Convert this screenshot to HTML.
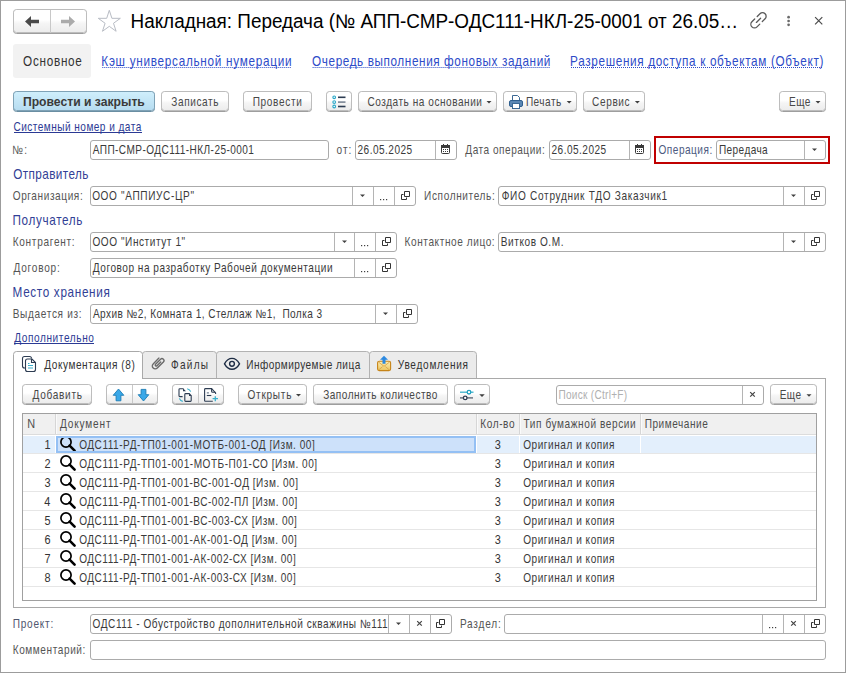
<!DOCTYPE html>
<html><head><meta charset="utf-8"><style>
html,body{margin:0;padding:0;background:#fff;}
svg{display:block;font-family:"Liberation Sans",sans-serif;}
</style></head><body>
<svg width="846" height="673" viewBox="0 0 846 673">
<defs>
<linearGradient id="gbtn" x1="0" y1="0" x2="0" y2="1"><stop offset="0" stop-color="#ffffff"/><stop offset="0.45" stop-color="#ffffff"/><stop offset="0.6" stop-color="#f5f5f5"/><stop offset="1" stop-color="#ececec"/></linearGradient>
<linearGradient id="genv" x1="0" y1="0" x2="0" y2="1"><stop offset="0" stop-color="#fdf0b8"/><stop offset="1" stop-color="#ecc45e"/></linearGradient>
<linearGradient id="gblue" x1="0" y1="0" x2="0" y2="1"><stop offset="0" stop-color="#d0effc"/><stop offset="1" stop-color="#b6dcf0"/></linearGradient>
</defs>
<rect x="0" y="0" width="846" height="673" fill="#fff"/>
<rect x="0.5" y="0.5" width="845" height="672" rx="0" fill="none" stroke="#9c9c9c" stroke-width="1"/>
<rect x="13.5" y="10" width="73" height="23.5" rx="3" fill="none" stroke="#9e9e9e"/>
<rect x="13.5" y="9.5" width="73" height="23" rx="3" fill="url(#gbtn)" stroke="#bdbdbd"/>
<rect x="50" y="10" width="1" height="23" fill="#c8c8c8"/>
<path d="M25 21.5l6-5.5v3.8h8v3.4h-8v3.8z" fill="#4a4a4a"/>
<path d="M75 21.5l-6-5.5v3.8h-8v3.4h8v3.8z" fill="#ababab"/>
<path d="M109.30 10.30L111.90 18.32L120.33 18.32L113.51 23.27L116.12 31.28L109.30 26.33L102.48 31.28L105.09 23.27L98.27 18.32L106.70 18.32z" fill="none" stroke="#b8bcc4" stroke-width="1" stroke-linejoin="round"/>
<text transform="translate(130.49,28) scale(0.9694,1)" font-size="19.5" font-weight="400" fill="#000" xml:space="preserve">Накладная: Передача (№ АПП-СМР-ОДС111-НКЛ-25-0001 от 26.05…</text>
<g transform="translate(758.5,20.3) rotate(-45)" fill="none" stroke="#5a5a5a" stroke-width="1.3" stroke-linecap="round"><path d="M1.8 -3.6H5.7A3.6 3.6 0 0 1 5.7 3.6H1.8"/><path d="M-1.8 -3.6H-5.7A3.6 3.6 0 0 0 -5.7 3.6H-1.8"/><path d="M-3 0H3"/></g>
<circle cx="788.6" cy="17.2" r="1.35" fill="#6a6a6a"/>
<circle cx="788.6" cy="21" r="1.35" fill="#6a6a6a"/>
<circle cx="788.6" cy="24.8" r="1.35" fill="#6a6a6a"/>
<path d="M815.1 17.099999999999998L822.3000000000001 24.3M822.3000000000001 17.099999999999998L815.1 24.3" stroke="#4a4a4a" stroke-width="1.2"/>
<rect x="13" y="44" width="78" height="34" rx="3" fill="#f2f2f2"/>
<text transform="translate(23.05,65.6) scale(0.8400,1)" font-size="14" font-weight="400" fill="#333" xml:space="preserve" letter-spacing="0.860">Основное</text>
<text transform="translate(101.36,65.6) scale(0.8400,1)" font-size="14" font-weight="400" fill="#2d4bc8" xml:space="preserve" letter-spacing="0.854">Кэш универсальной нумерации</text>
<line x1="102.3" y1="67.5" x2="291" y2="67.5" stroke="#2d4bc8" stroke-width="1" stroke-dasharray="1 1"/>
<text transform="translate(312.05,65.6) scale(0.8400,1)" font-size="14" font-weight="400" fill="#2d4bc8" xml:space="preserve" letter-spacing="0.716">Очередь выполнения фоновых заданий</text>
<line x1="312.6" y1="67.5" x2="550" y2="67.5" stroke="#2d4bc8" stroke-width="1" stroke-dasharray="1 1"/>
<text transform="translate(570.06,65.6) scale(0.8400,1)" font-size="14" font-weight="400" fill="#2d4bc8" xml:space="preserve" letter-spacing="0.783">Разрешения доступа к объектам (Объект)</text>
<line x1="571" y1="67.5" x2="823" y2="67.5" stroke="#2d4bc8" stroke-width="1" stroke-dasharray="1 1"/>
<rect x="13.5" y="92" width="141" height="19.5" rx="3" fill="none" stroke="#6a8ea2"/>
<rect x="13.5" y="91.5" width="141" height="19" rx="3" fill="url(#gblue)" stroke="#7fa2b6"/>
<text transform="translate(22.89,106) scale(1.0139,1)" font-size="12" font-weight="700" fill="#3a3a3a" xml:space="preserve">Провести и закрыть</text>
<rect x="161.5" y="92" width="67" height="19.5" rx="3" fill="none" stroke="#9e9e9e"/>
<rect x="161.5" y="91.5" width="67" height="19" rx="3" fill="url(#gbtn)" stroke="#bdbdbd"/>
<text transform="translate(171.26,106) scale(0.8400,1)" font-size="12" font-weight="400" fill="#484848" xml:space="preserve" letter-spacing="0.708">Записать</text>
<rect x="243.5" y="92" width="68" height="19.5" rx="3" fill="none" stroke="#9e9e9e"/>
<rect x="243.5" y="91.5" width="68" height="19" rx="3" fill="url(#gbtn)" stroke="#bdbdbd"/>
<text transform="translate(252.69,106) scale(0.8400,1)" font-size="12" font-weight="400" fill="#484848" xml:space="preserve" letter-spacing="0.770">Провести</text>
<rect x="326.5" y="92" width="25" height="19.5" rx="3" fill="none" stroke="#9e9e9e"/>
<rect x="326.5" y="91.5" width="25" height="19" rx="3" fill="url(#gbtn)" stroke="#bdbdbd"/>
<circle cx="334.2" cy="97.3" r="1.35" fill="#fff" stroke="#2aa8c8" stroke-width="1.1"/>
<rect x="338" y="96.5" width="7.5" height="1.6" fill="#2d3c52"/>
<circle cx="334.2" cy="102.1" r="1.35" fill="#fff" stroke="#2aa8c8" stroke-width="1.1"/>
<rect x="338" y="101.3" width="7.5" height="1.6" fill="#7a8594"/>
<circle cx="334.2" cy="106.5" r="1.35" fill="#fff" stroke="#2aa8c8" stroke-width="1.1"/>
<rect x="338" y="105.7" width="7.5" height="1.6" fill="#2d3c52"/>
<rect x="358.5" y="92" width="138" height="19.5" rx="3" fill="none" stroke="#9e9e9e"/>
<rect x="358.5" y="91.5" width="138" height="19" rx="3" fill="url(#gbtn)" stroke="#bdbdbd"/>
<text transform="translate(367.43,106) scale(0.8400,1)" font-size="12" font-weight="400" fill="#484848" xml:space="preserve" letter-spacing="0.625">Создать на основании</text>
<path d="M486.5 101h5l-2.5 2.5z" fill="#404040"/>
<rect x="503.5" y="92" width="73" height="19.5" rx="3" fill="none" stroke="#9e9e9e"/>
<rect x="503.5" y="91.5" width="73" height="19" rx="3" fill="url(#gbtn)" stroke="#bdbdbd"/>
<path d="M512.5 95.5h5l2 2v3h-7z" fill="#fff" stroke="#3b6894"/>
<rect x="509.5" y="100.5" width="13" height="6" rx="1.5" fill="#5b87b4" stroke="#2f5f8f"/>
<rect x="512.5" y="103.5" width="7" height="5" fill="#fff" stroke="#3b6894"/>
<text transform="translate(525.89,106) scale(0.8400,1)" font-size="12" font-weight="400" fill="#484848" xml:space="preserve" letter-spacing="0.575">Печать</text>
<path d="M566.7 101h5l-2.5 2.5z" fill="#404040"/>
<rect x="583.5" y="92" width="61" height="19.5" rx="3" fill="none" stroke="#9e9e9e"/>
<rect x="583.5" y="91.5" width="61" height="19" rx="3" fill="url(#gbtn)" stroke="#bdbdbd"/>
<text transform="translate(592.03,106) scale(0.8400,1)" font-size="12" font-weight="400" fill="#484848" xml:space="preserve" letter-spacing="0.738">Сервис</text>
<path d="M634.9 101h5l-2.5 2.5z" fill="#404040"/>
<rect x="779.5" y="92" width="46" height="19.5" rx="3" fill="none" stroke="#9e9e9e"/>
<rect x="779.5" y="91.5" width="46" height="19" rx="3" fill="url(#gbtn)" stroke="#bdbdbd"/>
<text transform="translate(789.09,106) scale(0.8400,1)" font-size="12" font-weight="400" fill="#484848" xml:space="preserve" letter-spacing="0.484">Еще</text>
<path d="M815.5 101h5l-2.5 2.5z" fill="#404040"/>
<text transform="translate(13.43,131) scale(0.8400,1)" font-size="12" font-weight="400" fill="#2b3a94" xml:space="preserve" letter-spacing="0.552">Системный номер и дата</text>
<rect x="14" y="132" width="128" height="1" fill="#2b3a94"/>
<text transform="translate(12.36,154) scale(0.8400,1)" font-size="12" font-weight="400" fill="#555555" xml:space="preserve" letter-spacing="1.167">№:</text>
<rect x="90.5" y="140.5" width="238" height="19" rx="2.5" fill="#fff" stroke="#ababab"/>
<text transform="translate(92.70,154) scale(0.8400,1)" font-size="12" font-weight="400" fill="#3a3a3a" xml:space="preserve" letter-spacing="0.508">АПП-СМР-ОДС111-НКЛ-25-0001</text>
<text transform="translate(336.40,154) scale(0.8400,1)" font-size="12" font-weight="400" fill="#555555" xml:space="preserve" letter-spacing="1.315">от:</text>
<rect x="355.5" y="140.5" width="101" height="19" rx="2.5" fill="#fff" stroke="#ababab"/>
<rect x="435" y="141" width="1" height="18" fill="#b4b4b4"/>
<text transform="translate(357.53,154) scale(0.8400,1)" font-size="12" font-weight="400" fill="#3a3a3a" xml:space="preserve" letter-spacing="0.556">26.05.2025</text>
<rect x="441.5" y="145.5" width="8" height="8" rx="1" fill="#fff" stroke="#3a3a3a"/>
<rect x="441" y="145" width="9" height="3" fill="#3a3a3a"/>
<rect x="443" y="144" width="1" height="2" fill="#3a3a3a"/>
<rect x="447" y="144" width="1" height="2" fill="#3a3a3a"/>
<rect x="443" y="149" width="1" height="1" fill="#3a3a3a"/>
<rect x="443" y="151" width="1" height="1" fill="#3a3a3a"/>
<rect x="445" y="149" width="1" height="1" fill="#3a3a3a"/>
<rect x="445" y="151" width="1" height="1" fill="#3a3a3a"/>
<rect x="447" y="149" width="1" height="1" fill="#3a3a3a"/>
<rect x="447" y="151" width="1" height="1" fill="#3a3a3a"/>
<text transform="translate(465.33,154) scale(0.8400,1)" font-size="12" font-weight="400" fill="#555555" xml:space="preserve" letter-spacing="0.601">Дата операции:</text>
<rect x="549.5" y="140.5" width="101" height="19" rx="2.5" fill="#fff" stroke="#ababab"/>
<rect x="629" y="141" width="1" height="18" fill="#b4b4b4"/>
<text transform="translate(551.53,154) scale(0.8400,1)" font-size="12" font-weight="400" fill="#3a3a3a" xml:space="preserve" letter-spacing="0.556">26.05.2025</text>
<rect x="635.5" y="145.5" width="8" height="8" rx="1" fill="#fff" stroke="#3a3a3a"/>
<rect x="635" y="145" width="9" height="3" fill="#3a3a3a"/>
<rect x="637" y="144" width="1" height="2" fill="#3a3a3a"/>
<rect x="641" y="144" width="1" height="2" fill="#3a3a3a"/>
<rect x="637" y="149" width="1" height="1" fill="#3a3a3a"/>
<rect x="637" y="151" width="1" height="1" fill="#3a3a3a"/>
<rect x="639" y="149" width="1" height="1" fill="#3a3a3a"/>
<rect x="639" y="151" width="1" height="1" fill="#3a3a3a"/>
<rect x="641" y="149" width="1" height="1" fill="#3a3a3a"/>
<rect x="641" y="151" width="1" height="1" fill="#3a3a3a"/>
<rect x="655" y="137" width="174" height="26" fill="none" stroke="#c00000" stroke-width="2"/>
<text transform="translate(658.53,154) scale(0.8400,1)" font-size="12" font-weight="400" fill="#4d5a80" xml:space="preserve" letter-spacing="0.583">Операция:</text>
<rect x="716.5" y="140.5" width="109" height="19" rx="2.5" fill="#fff" stroke="#ababab"/>
<rect x="804" y="141" width="1" height="18" fill="#b4b4b4"/>
<text transform="translate(718.99,154) scale(0.8400,1)" font-size="12" font-weight="400" fill="#3a3a3a" xml:space="preserve" letter-spacing="0.466">Передача</text>
<path d="M812.0 148.5h5l-2.5 2.5z" fill="#404040"/>
<text transform="translate(13.25,179) scale(0.8400,1)" font-size="14" font-weight="400" fill="#323f96" xml:space="preserve" letter-spacing="0.480">Отправитель</text>
<text transform="translate(12.73,200) scale(0.8400,1)" font-size="12" font-weight="400" fill="#555555" xml:space="preserve" letter-spacing="0.690">Организация:</text>
<rect x="90.5" y="186.5" width="325" height="19" rx="2.5" fill="#fff" stroke="#ababab"/>
<rect x="352" y="187" width="1" height="18" fill="#b4b4b4"/>
<rect x="373" y="187" width="1" height="18" fill="#b4b4b4"/>
<rect x="394" y="187" width="1" height="18" fill="#b4b4b4"/>
<text transform="translate(92.13,200) scale(0.8400,1)" font-size="12" font-weight="400" fill="#3a3a3a" xml:space="preserve" letter-spacing="0.754">ООО &quot;АППИУС-ЦР&quot;</text>
<path d="M360.0 194.5h5l-2.5 2.5z" fill="#404040"/>
<rect x="380.0" y="199" width="1.2" height="1.2" fill="#404040"/>
<rect x="383.0" y="199" width="1.2" height="1.2" fill="#404040"/>
<rect x="386.0" y="199" width="1.2" height="1.2" fill="#404040"/>
<path d="M404.5 191.5h5v5h-5z" fill="none" stroke="#333" stroke-width="1"/>
<path d="M403.5 194.5h-2v5h5v-2" fill="none" stroke="#333" stroke-width="1"/>
<text transform="translate(424.09,200) scale(0.8400,1)" font-size="12" font-weight="400" fill="#555555" xml:space="preserve" letter-spacing="0.733">Исполнитель:</text>
<rect x="498.5" y="186.5" width="327" height="19" rx="2.5" fill="#fff" stroke="#ababab"/>
<rect x="783" y="187" width="1" height="18" fill="#b4b4b4"/>
<rect x="804" y="187" width="1" height="18" fill="#b4b4b4"/>
<text transform="translate(501.76,200) scale(0.8400,1)" font-size="12" font-weight="400" fill="#3a3a3a" xml:space="preserve" letter-spacing="0.818">ФИО Сотрудник ТДО Заказчик1</text>
<path d="M791.0 194.5h5l-2.5 2.5z" fill="#404040"/>
<path d="M814.5 191.5h5v5h-5z" fill="none" stroke="#333" stroke-width="1"/>
<path d="M813.5 194.5h-2v5h5v-2" fill="none" stroke="#333" stroke-width="1"/>
<text transform="translate(12.56,225) scale(0.8400,1)" font-size="14" font-weight="400" fill="#323f96" xml:space="preserve" letter-spacing="0.744">Получатель</text>
<text transform="translate(12.69,246) scale(0.8400,1)" font-size="12" font-weight="400" fill="#555555" xml:space="preserve" letter-spacing="0.843">Контрагент:</text>
<rect x="90.5" y="232.5" width="306" height="19" rx="2.5" fill="#fff" stroke="#ababab"/>
<rect x="334" y="233" width="1" height="18" fill="#b4b4b4"/>
<rect x="354" y="233" width="1" height="18" fill="#b4b4b4"/>
<rect x="375" y="233" width="1" height="18" fill="#b4b4b4"/>
<text transform="translate(92.43,246) scale(0.8400,1)" font-size="12" font-weight="400" fill="#3a3a3a" xml:space="preserve" letter-spacing="0.662">ООО &quot;Институт 1&quot;</text>
<path d="M342.0 240.5h5l-2.5 2.5z" fill="#404040"/>
<rect x="361.0" y="245" width="1.2" height="1.2" fill="#404040"/>
<rect x="364.0" y="245" width="1.2" height="1.2" fill="#404040"/>
<rect x="367.0" y="245" width="1.2" height="1.2" fill="#404040"/>
<path d="M385.5 237.5h5v5h-5z" fill="none" stroke="#333" stroke-width="1"/>
<path d="M384.5 240.5h-2v5h5v-2" fill="none" stroke="#333" stroke-width="1"/>
<text transform="translate(404.59,246) scale(0.8400,1)" font-size="12" font-weight="400" fill="#555555" xml:space="preserve" letter-spacing="0.685">Контактное лицо:</text>
<rect x="498.5" y="232.5" width="327" height="19" rx="2.5" fill="#fff" stroke="#ababab"/>
<rect x="783" y="233" width="1" height="18" fill="#b4b4b4"/>
<rect x="804" y="233" width="1" height="18" fill="#b4b4b4"/>
<text transform="translate(500.79,246) scale(0.8400,1)" font-size="12" font-weight="400" fill="#3a3a3a" xml:space="preserve" letter-spacing="0.670">Витков О.М.</text>
<path d="M791.0 240.5h5l-2.5 2.5z" fill="#404040"/>
<path d="M814.5 237.5h5v5h-5z" fill="none" stroke="#333" stroke-width="1"/>
<path d="M813.5 240.5h-2v5h5v-2" fill="none" stroke="#333" stroke-width="1"/>
<text transform="translate(13.43,272) scale(0.8400,1)" font-size="12" font-weight="400" fill="#555555" xml:space="preserve" letter-spacing="0.933">Договор:</text>
<rect x="90.5" y="258.5" width="306" height="19" rx="2.5" fill="#fff" stroke="#ababab"/>
<rect x="354" y="259" width="1" height="18" fill="#b4b4b4"/>
<rect x="375" y="259" width="1" height="18" fill="#b4b4b4"/>
<text transform="translate(92.83,272) scale(0.8400,1)" font-size="12" font-weight="400" fill="#3a3a3a" xml:space="preserve" letter-spacing="0.616">Договор на разработку Рабочей документации</text>
<rect x="361.0" y="271" width="1.2" height="1.2" fill="#404040"/>
<rect x="364.0" y="271" width="1.2" height="1.2" fill="#404040"/>
<rect x="367.0" y="271" width="1.2" height="1.2" fill="#404040"/>
<path d="M385.5 263.5h5v5h-5z" fill="none" stroke="#333" stroke-width="1"/>
<path d="M384.5 266.5h-2v5h5v-2" fill="none" stroke="#333" stroke-width="1"/>
<text transform="translate(12.56,297) scale(0.8400,1)" font-size="14" font-weight="400" fill="#323f96" xml:space="preserve" letter-spacing="0.787">Место хранения</text>
<text transform="translate(12.69,318) scale(0.8400,1)" font-size="12" font-weight="400" fill="#555555" xml:space="preserve" letter-spacing="0.793">Выдается из:</text>
<rect x="90.5" y="304.5" width="327" height="19" rx="2.5" fill="#fff" stroke="#ababab"/>
<rect x="375" y="305" width="1" height="18" fill="#b4b4b4"/>
<rect x="396" y="305" width="1" height="18" fill="#b4b4b4"/>
<text transform="translate(92.90,318) scale(0.8400,1)" font-size="12" font-weight="400" fill="#3a3a3a" xml:space="preserve" letter-spacing="0.498">Архив №2, Комната 1, Стеллаж №1,  Полка 3</text>
<path d="M383.0 312.5h5l-2.5 2.5z" fill="#404040"/>
<path d="M406.5 309.5h5v5h-5z" fill="none" stroke="#333" stroke-width="1"/>
<path d="M405.5 312.5h-2v5h5v-2" fill="none" stroke="#333" stroke-width="1"/>
<text transform="translate(14.13,342) scale(0.8400,1)" font-size="12" font-weight="400" fill="#2b3a94" xml:space="preserve" letter-spacing="0.724">Дополнительно</text>
<rect x="14" y="343" width="80" height="1" fill="#2b3a94"/>
<path d="M142.5 378V354.5a3 3 0 0 1 3-3H213.5a3 3 0 0 1 3 3V378" fill="#ebebeb" stroke="#b2b2b2"/>
<path d="M216.5 378V354.5a3 3 0 0 1 3-3H366.5a3 3 0 0 1 3 3V378" fill="#ebebeb" stroke="#b2b2b2"/>
<path d="M369.5 378V354.5a3 3 0 0 1 3-3H473.5a3 3 0 0 1 3 3V378" fill="#ebebeb" stroke="#b2b2b2"/>
<rect x="13.5" y="378.5" width="812" height="229" fill="#fff" stroke="#a9a9a9"/>
<path d="M13.5 379V354.5a3 3 0 0 1 3-3H139.5a3 3 0 0 1 3 3V379" fill="#fff" stroke="#a9a9a9"/>
<rect x="14" y="378" width="128" height="2" fill="#fff"/>
<g fill="none" stroke="#2d3c52" stroke-width="1.1"><path d="M25 368h-0.5a2 2 0 0 1-2-2v-7.5a2 2 0 0 1 2-2h5a2 2 0 0 1 2 2"/><path d="M25.5 369.5v-8.5a2 2 0 0 1 2-2h4.5l3.5 3.5v7a2 2 0 0 1-2 2h-6a2 2 0 0 1-2-2z" fill="#fff"/><path d="M31.5 359v3.5h3.5"/></g>
<g stroke="#3ab0cc" stroke-width="1.1"><path d="M28 363.5h1.5M28 365.5h5M28 368h5"/></g>
<text transform="translate(44.23,369) scale(0.8400,1)" font-size="12" font-weight="400" fill="#333" xml:space="preserve" letter-spacing="0.666">Документация (8)</text>
<g transform="translate(157.9,363.3) rotate(-45) scale(1.05)" fill="none" stroke="#6a6a6a" stroke-width="1.3" stroke-linecap="round"><path d="M4.2 -2.8H-3.6A2.8 2.8 0 0 0 -3.6 2.8H4.6A1.9 1.9 0 0 0 4.6 -1H-2.2A1 1 0 0 0 -2.2 1H2.8"/></g>
<text transform="translate(171.06,369) scale(0.8400,1)" font-size="12" font-weight="400" fill="#333" xml:space="preserve" letter-spacing="1.465">Файлы</text>
<path d="M224.5 363.8c2-3.6 4.6-5.4 7.5-5.4s5.5 1.8 7.5 5.4c-2 3.6-4.6 5.4-7.5 5.4s-5.5-1.8-7.5-5.4z" fill="none" stroke="#1d2c44" stroke-width="1.4"/>
<circle cx="232" cy="363.8" r="2.4" fill="none" stroke="#1d2c44" stroke-width="1.4"/>
<text transform="translate(246.19,369) scale(0.8400,1)" font-size="12" font-weight="400" fill="#333" xml:space="preserve" letter-spacing="0.541">Информируемые лица</text>
<rect x="377.6" y="361.2" width="13" height="9.4" rx="1.6" fill="url(#genv)" stroke="#c68419" stroke-width="1.1"/>
<path d="M378.4 362l5.6 4.3 5.6-4.3M378.6 370l4-3.4M389.4 370l-4-3.4" fill="none" stroke="#d8a448" stroke-width="0.9"/>
<path d="M384 355.8l4 4h-2.5v4h-3v-4H380z" fill="#2a88e0"/>
<text transform="translate(397.83,369) scale(0.8400,1)" font-size="12" font-weight="400" fill="#333" xml:space="preserve" letter-spacing="0.858">Уведомления</text>
<rect x="22.5" y="385" width="69" height="19.5" rx="3" fill="none" stroke="#9e9e9e"/>
<rect x="22.5" y="384.5" width="69" height="19" rx="3" fill="url(#gbtn)" stroke="#bdbdbd"/>
<text transform="translate(32.53,399) scale(0.8400,1)" font-size="12" font-weight="400" fill="#484848" xml:space="preserve" letter-spacing="0.836">Добавить</text>
<rect x="106.5" y="385" width="51" height="19.5" rx="3" fill="none" stroke="#9e9e9e"/>
<rect x="106.5" y="384.5" width="51" height="19" rx="3" fill="url(#gbtn)" stroke="#bdbdbd"/>
<rect x="132" y="385" width="1" height="18" fill="#c8c8c8"/>
<path d="M118.5 389l5.3 6.3h-2.9v5.5h-4.8v-5.5h-2.9z" fill="#3aa8e8" stroke="#1c7cb4" stroke-width="0.9"/>
<path d="M143.5 401l5.3-6.3h-2.9v-5.3h-4.8v5.3h-2.9z" fill="#3aa8e8" stroke="#1c7cb4" stroke-width="0.9"/>
<rect x="172.5" y="385" width="51" height="19.5" rx="3" fill="none" stroke="#9e9e9e"/>
<rect x="172.5" y="384.5" width="51" height="19" rx="3" fill="url(#gbtn)" stroke="#bdbdbd"/>
<rect x="198" y="385" width="1" height="18" fill="#c8c8c8"/>
<g fill="none" stroke="#2d3c52" stroke-width="1.1"><path d="M182.6 396.6H179.8a0.8 0.8 0 0 1-0.8-0.8V389.6a0.8 0.8 0 0 1 0.8-0.8H183.4"/><path d="M184.8 400.6V394.4a0.8 0.8 0 0 1 0.8-0.8H189.2L191.2 395.8V400.6a0.8 0.8 0 0 1-0.8 0.8H185.6a0.8 0.8 0 0 1-0.8-0.8z"/></g>
<path d="M183 388.2l3 3h-3z" fill="#2d3c52"/>
<path d="M189 393.4l2.6 2.6h-2.6z" fill="#2d3c52"/>
<g fill="none" stroke="#3ab0cc" stroke-width="1.1"><path d="M187.2 388.7q2.7 0.6 3.5 3"/><path d="M179.4 398.4q0.8 2.5 3.4 3"/></g>
<g fill="none" stroke="#2d3c52" stroke-width="1.1"><path d="M212.8 401.3H205.5a0.9 0.9 0 0 1-0.9-0.9V389.5a0.9 0.9 0 0 1 0.9-0.9H211.6L215.6 393V394"/><path d="M211.6 388.8V391.3a1 1 0 0 0 1 1H215.4"/><path d="M206.8 395.5H211.3"/></g>
<rect x="206.8" y="392.1" width="2.1" height="1.5" fill="#8a96a4"/>
<path d="M215.3 396.2v5M212.6 398.6h5.4" stroke="#3ab0cc" stroke-width="1.3"/>
<rect x="238.5" y="385" width="68" height="19.5" rx="3" fill="none" stroke="#9e9e9e"/>
<rect x="238.5" y="384.5" width="68" height="19" rx="3" fill="url(#gbtn)" stroke="#bdbdbd"/>
<text transform="translate(247.53,399) scale(0.8400,1)" font-size="12" font-weight="400" fill="#484848" xml:space="preserve" letter-spacing="0.852">Открыть</text>
<path d="M296.0 394h5l-2.5 2.5z" fill="#404040"/>
<rect x="313.5" y="385" width="134" height="19.5" rx="3" fill="none" stroke="#9e9e9e"/>
<rect x="313.5" y="384.5" width="134" height="19" rx="3" fill="url(#gbtn)" stroke="#bdbdbd"/>
<text transform="translate(323.16,399) scale(0.8400,1)" font-size="12" font-weight="400" fill="#484848" xml:space="preserve" letter-spacing="0.577">Заполнить количество</text>
<rect x="454.5" y="385" width="35" height="19.5" rx="3" fill="none" stroke="#9e9e9e"/>
<rect x="454.5" y="384.5" width="35" height="19" rx="3" fill="url(#gbtn)" stroke="#bdbdbd"/>
<path d="M460 392.2h13.5" stroke="#3ab0cc" stroke-width="1.3"/>
<circle cx="469" cy="392.2" r="1.8" fill="#fff" stroke="#20a0c0" stroke-width="1.3"/>
<path d="M460 397.9h13" stroke="#556070" stroke-width="1.3"/>
<circle cx="465.2" cy="397.9" r="1.8" fill="#fff" stroke="#2d3c52" stroke-width="1.3"/>
<path d="M479.25 394.2h5.5l-2.75 2.75z" fill="#404040"/>
<rect x="556.5" y="385.5" width="207" height="19" rx="2.5" fill="#fff" stroke="#ababab"/>
<rect x="742" y="386" width="1" height="18" fill="#b4b4b4"/>
<text transform="translate(558.49,399) scale(0.8400,1)" font-size="12" font-weight="400" fill="#b0b0b0" xml:space="preserve" letter-spacing="0.314">Поиск (Ctrl+F)</text>
<path d="M750.2 392.09999999999997L754.8 396.7M754.8 392.09999999999997L750.2 396.7" stroke="#444444" stroke-width="1.2"/>
<rect x="770.5" y="385" width="46" height="19.5" rx="3" fill="none" stroke="#9e9e9e"/>
<rect x="770.5" y="384.5" width="46" height="19" rx="3" fill="url(#gbtn)" stroke="#bdbdbd"/>
<text transform="translate(779.69,399) scale(0.8400,1)" font-size="12" font-weight="400" fill="#484848" xml:space="preserve" letter-spacing="0.484">Еще</text>
<path d="M806.5 394.2h5l-2.5 2.5z" fill="#404040"/>
<rect x="22.5" y="413.5" width="794" height="187" fill="#fff" stroke="#a0a0a0"/>
<rect x="23" y="414" width="793" height="20" fill="#f0f0f0"/>
<rect x="23" y="434" width="793" height="1" fill="#dcdcdc"/>
<rect x="55" y="414" width="1" height="20" fill="#d6d6d6"/>
<rect x="56" y="414" width="1" height="20" fill="#fafafa"/>
<rect x="476" y="414" width="1" height="20" fill="#d6d6d6"/>
<rect x="477" y="414" width="1" height="20" fill="#fafafa"/>
<rect x="519" y="414" width="1" height="20" fill="#d6d6d6"/>
<rect x="520" y="414" width="1" height="20" fill="#fafafa"/>
<rect x="640" y="414" width="1" height="20" fill="#d6d6d6"/>
<rect x="641" y="414" width="1" height="20" fill="#fafafa"/>
<text transform="translate(27.33,428) scale(0.9100,1)" font-size="12" font-weight="400" fill="#4d4d4d" xml:space="preserve">N</text>
<text transform="translate(60.03,428) scale(0.8400,1)" font-size="12" font-weight="400" fill="#4d4d4d" xml:space="preserve" letter-spacing="0.989">Документ</text>
<text transform="translate(480.29,428) scale(0.8400,1)" font-size="12" font-weight="400" fill="#4d4d4d" xml:space="preserve" letter-spacing="0.689">Кол-во</text>
<text transform="translate(523.50,428) scale(0.8400,1)" font-size="12" font-weight="400" fill="#4d4d4d" xml:space="preserve" letter-spacing="0.690">Тип бумажной версии</text>
<text transform="translate(644.69,428) scale(0.8400,1)" font-size="12" font-weight="400" fill="#4d4d4d" xml:space="preserve" letter-spacing="0.646">Примечание</text>
<rect x="23" y="436" width="793" height="17" fill="#e3effc"/>
<rect x="56" y="436" width="420" height="17" fill="#cde1fa"/>
<rect x="23" y="453" width="793" height="1" fill="#e6e6e6"/>
<text transform="translate(44.47,448.5) scale(0.9100,1)" font-size="12" font-weight="400" fill="#333" xml:space="preserve">1</text>
<circle cx="66" cy="442" r="5.1" fill="none" stroke="#000" stroke-width="1.7"/>
<path d="M69.6 445.6L74.6 450.6" stroke="#000" stroke-width="2.6" stroke-linecap="round"/>
<text transform="translate(79.13,448.5) scale(0.8400,1)" font-size="12" font-weight="400" fill="#3a3a3a" xml:space="preserve" letter-spacing="0.608">ОДС111-РД-ТП01-001-МОТБ-001-ОД [Изм. 00]</text>
<text transform="translate(494.68,448.5) scale(0.9100,1)" font-size="12" font-weight="400" fill="#333" xml:space="preserve">3</text>
<text transform="translate(523.23,448.5) scale(0.8400,1)" font-size="12" font-weight="400" fill="#3a3a3a" xml:space="preserve" letter-spacing="0.620">Оригинал и копия</text>
<rect x="23" y="472" width="793" height="1" fill="#e6e6e6"/>
<text transform="translate(44.47,467.5) scale(0.9100,1)" font-size="12" font-weight="400" fill="#333" xml:space="preserve">2</text>
<circle cx="66" cy="461" r="5.1" fill="none" stroke="#000" stroke-width="1.7"/>
<path d="M69.6 464.6L74.6 469.6" stroke="#000" stroke-width="2.6" stroke-linecap="round"/>
<text transform="translate(79.13,467.5) scale(0.8400,1)" font-size="12" font-weight="400" fill="#3a3a3a" xml:space="preserve" letter-spacing="0.614">ОДС111-РД-ТП01-001-МОТБ-П01-СО [Изм. 00]</text>
<text transform="translate(494.68,467.5) scale(0.9100,1)" font-size="12" font-weight="400" fill="#333" xml:space="preserve">3</text>
<text transform="translate(523.23,467.5) scale(0.8400,1)" font-size="12" font-weight="400" fill="#3a3a3a" xml:space="preserve" letter-spacing="0.620">Оригинал и копия</text>
<rect x="23" y="491" width="793" height="1" fill="#e6e6e6"/>
<text transform="translate(44.39,486.5) scale(0.9100,1)" font-size="12" font-weight="400" fill="#333" xml:space="preserve">3</text>
<circle cx="66" cy="480" r="5.1" fill="none" stroke="#000" stroke-width="1.7"/>
<path d="M69.6 483.6L74.6 488.6" stroke="#000" stroke-width="2.6" stroke-linecap="round"/>
<text transform="translate(79.13,486.5) scale(0.8400,1)" font-size="12" font-weight="400" fill="#3a3a3a" xml:space="preserve" letter-spacing="0.595">ОДС111-РД-ТП01-001-ВС-001-ОД [Изм. 00]</text>
<text transform="translate(494.68,486.5) scale(0.9100,1)" font-size="12" font-weight="400" fill="#333" xml:space="preserve">3</text>
<text transform="translate(523.23,486.5) scale(0.8400,1)" font-size="12" font-weight="400" fill="#3a3a3a" xml:space="preserve" letter-spacing="0.620">Оригинал и копия</text>
<rect x="23" y="510" width="793" height="1" fill="#e6e6e6"/>
<text transform="translate(44.25,505.5) scale(0.9100,1)" font-size="12" font-weight="400" fill="#333" xml:space="preserve">4</text>
<circle cx="66" cy="499" r="5.1" fill="none" stroke="#000" stroke-width="1.7"/>
<path d="M69.6 502.6L74.6 507.6" stroke="#000" stroke-width="2.6" stroke-linecap="round"/>
<text transform="translate(79.13,505.5) scale(0.8400,1)" font-size="12" font-weight="400" fill="#3a3a3a" xml:space="preserve" letter-spacing="0.593">ОДС111-РД-ТП01-001-ВС-002-ПЛ [Изм. 00]</text>
<text transform="translate(494.68,505.5) scale(0.9100,1)" font-size="12" font-weight="400" fill="#333" xml:space="preserve">3</text>
<text transform="translate(523.23,505.5) scale(0.8400,1)" font-size="12" font-weight="400" fill="#3a3a3a" xml:space="preserve" letter-spacing="0.620">Оригинал и копия</text>
<rect x="23" y="529" width="793" height="1" fill="#e6e6e6"/>
<text transform="translate(44.39,524.5) scale(0.9100,1)" font-size="12" font-weight="400" fill="#333" xml:space="preserve">5</text>
<circle cx="66" cy="518" r="5.1" fill="none" stroke="#000" stroke-width="1.7"/>
<path d="M69.6 521.6L74.6 526.6" stroke="#000" stroke-width="2.6" stroke-linecap="round"/>
<text transform="translate(79.13,524.5) scale(0.8400,1)" font-size="12" font-weight="400" fill="#3a3a3a" xml:space="preserve" letter-spacing="0.592">ОДС111-РД-ТП01-001-ВС-003-СХ [Изм. 00]</text>
<text transform="translate(494.68,524.5) scale(0.9100,1)" font-size="12" font-weight="400" fill="#333" xml:space="preserve">3</text>
<text transform="translate(523.23,524.5) scale(0.8400,1)" font-size="12" font-weight="400" fill="#3a3a3a" xml:space="preserve" letter-spacing="0.620">Оригинал и копия</text>
<rect x="23" y="548" width="793" height="1" fill="#e6e6e6"/>
<text transform="translate(44.39,543.5) scale(0.9100,1)" font-size="12" font-weight="400" fill="#333" xml:space="preserve">6</text>
<circle cx="66" cy="537" r="5.1" fill="none" stroke="#000" stroke-width="1.7"/>
<path d="M69.6 540.6L74.6 545.6" stroke="#000" stroke-width="2.6" stroke-linecap="round"/>
<text transform="translate(79.13,543.5) scale(0.8400,1)" font-size="12" font-weight="400" fill="#3a3a3a" xml:space="preserve" letter-spacing="0.592">ОДС111-РД-ТП01-001-АК-001-ОД [Изм. 00]</text>
<text transform="translate(494.68,543.5) scale(0.9100,1)" font-size="12" font-weight="400" fill="#333" xml:space="preserve">3</text>
<text transform="translate(523.23,543.5) scale(0.8400,1)" font-size="12" font-weight="400" fill="#3a3a3a" xml:space="preserve" letter-spacing="0.620">Оригинал и копия</text>
<rect x="23" y="567" width="793" height="1" fill="#e6e6e6"/>
<text transform="translate(44.47,562.5) scale(0.9100,1)" font-size="12" font-weight="400" fill="#333" xml:space="preserve">7</text>
<circle cx="66" cy="556" r="5.1" fill="none" stroke="#000" stroke-width="1.7"/>
<path d="M69.6 559.6L74.6 564.6" stroke="#000" stroke-width="2.6" stroke-linecap="round"/>
<text transform="translate(79.13,562.5) scale(0.8400,1)" font-size="12" font-weight="400" fill="#3a3a3a" xml:space="preserve" letter-spacing="0.589">ОДС111-РД-ТП01-001-АК-002-СХ [Изм. 00]</text>
<text transform="translate(494.68,562.5) scale(0.9100,1)" font-size="12" font-weight="400" fill="#333" xml:space="preserve">3</text>
<text transform="translate(523.23,562.5) scale(0.8400,1)" font-size="12" font-weight="400" fill="#3a3a3a" xml:space="preserve" letter-spacing="0.620">Оригинал и копия</text>
<rect x="23" y="586" width="793" height="1" fill="#e6e6e6"/>
<text transform="translate(44.39,581.5) scale(0.9100,1)" font-size="12" font-weight="400" fill="#333" xml:space="preserve">8</text>
<circle cx="66" cy="575" r="5.1" fill="none" stroke="#000" stroke-width="1.7"/>
<path d="M69.6 578.6L74.6 583.6" stroke="#000" stroke-width="2.6" stroke-linecap="round"/>
<text transform="translate(79.13,581.5) scale(0.8400,1)" font-size="12" font-weight="400" fill="#3a3a3a" xml:space="preserve" letter-spacing="0.589">ОДС111-РД-ТП01-001-АК-003-СХ [Изм. 00]</text>
<text transform="translate(494.68,581.5) scale(0.9100,1)" font-size="12" font-weight="400" fill="#333" xml:space="preserve">3</text>
<text transform="translate(523.23,581.5) scale(0.8400,1)" font-size="12" font-weight="400" fill="#3a3a3a" xml:space="preserve" letter-spacing="0.620">Оригинал и копия</text>
<rect x="57" y="437" width="418" height="15" fill="none" stroke="#94c0f4" stroke-width="2"/>
<rect x="55" y="436" width="1" height="17" fill="#ffffff"/>
<rect x="476" y="436" width="1" height="17" fill="#ffffff"/>
<rect x="519" y="436" width="1" height="17" fill="#ffffff"/>
<rect x="640" y="436" width="1" height="17" fill="#ffffff"/>
<text transform="translate(12.69,628) scale(0.8400,1)" font-size="12" font-weight="400" fill="#50566e" xml:space="preserve" letter-spacing="0.898">Проект:</text>
<rect x="90.5" y="614.5" width="361" height="19" rx="2.5" fill="#fff" stroke="#ababab"/>
<rect x="388" y="615" width="1" height="18" fill="#b4b4b4"/>
<rect x="409" y="615" width="1" height="18" fill="#b4b4b4"/>
<rect x="430" y="615" width="1" height="18" fill="#b4b4b4"/>
<clipPath id="cp1"><rect x="91" y="615" width="297" height="18"/></clipPath>
<g clip-path="url(#cp1)">
<text transform="translate(92.53,628) scale(0.8400,1)" font-size="12" font-weight="400" fill="#3a3a3a" xml:space="preserve" letter-spacing="0.650">ОДС111 - Обустройство дополнительной скважины №111</text>
</g>
<path d="M396.0 622.5h5l-2.5 2.5z" fill="#404040"/>
<path d="M417.2 621.1L421.8 625.6999999999999M421.8 621.1L417.2 625.6999999999999" stroke="#444444" stroke-width="1.2"/>
<path d="M439.5 619.5h5v5h-5z" fill="none" stroke="#333" stroke-width="1"/>
<path d="M438.5 622.5h-2v5h5v-2" fill="none" stroke="#333" stroke-width="1"/>
<text transform="translate(459.89,628) scale(0.8400,1)" font-size="12" font-weight="400" fill="#555555" xml:space="preserve" letter-spacing="0.951">Раздел:</text>
<rect x="504.5" y="614.5" width="321" height="19" rx="2.5" fill="#fff" stroke="#ababab"/>
<rect x="762" y="615" width="1" height="18" fill="#b4b4b4"/>
<rect x="783" y="615" width="1" height="18" fill="#b4b4b4"/>
<rect x="804" y="615" width="1" height="18" fill="#b4b4b4"/>
<rect x="769.0" y="627" width="1.2" height="1.2" fill="#404040"/>
<rect x="772.0" y="627" width="1.2" height="1.2" fill="#404040"/>
<rect x="775.0" y="627" width="1.2" height="1.2" fill="#404040"/>
<path d="M791.2 621.1L795.8 625.6999999999999M795.8 621.1L791.2 625.6999999999999" stroke="#444444" stroke-width="1.2"/>
<path d="M814.5 619.5h5v5h-5z" fill="none" stroke="#333" stroke-width="1"/>
<path d="M813.5 622.5h-2v5h5v-2" fill="none" stroke="#333" stroke-width="1"/>
<text transform="translate(12.69,654) scale(0.8400,1)" font-size="12" font-weight="400" fill="#555555" xml:space="preserve" letter-spacing="0.695">Комментарий:</text>
<rect x="90.5" y="640.5" width="735" height="19" rx="2.5" fill="#fff" stroke="#ababab"/>
</svg>
</body></html>
